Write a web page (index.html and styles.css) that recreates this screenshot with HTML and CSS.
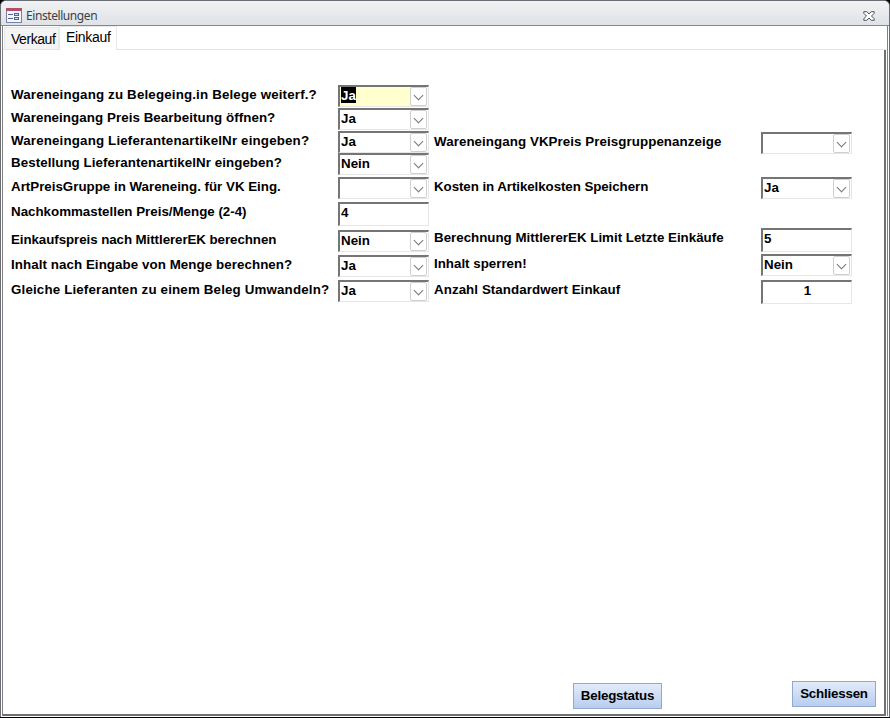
FILE: index.html
```
<!DOCTYPE html>
<html lang="de">

<head>
    <meta charset="UTF-8">
    <title>Einstellungen</title>
    <link rel="stylesheet" href="styles.css">
</head>

<body>

    <div class="window">
        <div class="titlebar">
            <svg class="form-icon" width="16" height="15" viewBox="0 0 16 15">
                <rect x="0.5" y="0.5" width="15" height="14" fill="#f4f6fc" stroke="#7783a8"/>
                <rect x="0" y="0" width="16" height="3" fill="#b0506a"/>
                <path d="M2 6.500h5M2 10.500h5" stroke="#56648f"/>
                <rect x="8.5" y="5.5" width="4" height="2" fill="#cfdcf5" stroke="#56648f"/>
                <rect x="8.5" y="9.5" width="4" height="2" fill="#cfdcf5" stroke="#56648f"/>
            </svg>
            <span class="title">Einstellungen</span>
            <svg class="close" width="12" height="10" viewBox="0 0 12 10">
                <path d="M0.800 0.700h3L6 3l2.200-2.300h3v1.600L8.500 5l2.700 2.700v1.600h-3L6 7 3.800 9.300h-3V7.700L3.500 5 0.800 2.300z" fill="#fff" stroke="#4d535e"/>
            </svg>
        </div>

        <div class="client">
            <div class="tabs">
                <div class="tab">Verkauf</div>
                <div class="tab active">Einkauf</div>
            </div>

            <div class="page">
                <div class="forms">
                    <div class="form left">
                        <label class="wide">Wareneingang zu Belegeing.in Belege weiterf.?</label>
                        <div class="field combo focus"><span class="selected">Ja</span><i class="arrow"></i></div>
                        <label class="mid">Wareneingang Preis Bearbeitung öffnen?</label>
                        <div class="field combo"><span>Ja</span><i class="arrow"></i></div>
                        <label class="wide">Wareneingang LieferantenartikelNr eingeben?</label>
                        <div class="field combo"><span>Ja</span><i class="arrow"></i></div>
                        <label class="mid">Bestellung LieferantenartikelNr eingeben?</label>
                        <div class="field combo"><span>Nein</span><i class="arrow"></i></div>
                        <label>ArtPreisGruppe in Wareneing. für VK Eing.</label>
                        <div class="field combo"><span></span><i class="arrow"></i></div>
                        <label>Nachkommastellen Preis/Menge (2-4)</label>
                        <div class="field text"><span>4</span></div>
                        <label class="tight">Einkaufspreis nach MittlererEK berechnen</label>
                        <div class="field combo"><span>Nein</span><i class="arrow"></i></div>
                        <label class="mid">Inhalt nach Eingabe von Menge berechnen?</label>
                        <div class="field combo"><span>Ja</span><i class="arrow"></i></div>
                        <label class="wide">Gleiche Lieferanten zu einem Beleg Umwandeln?</label>
                        <div class="field combo"><span>Ja</span><i class="arrow"></i></div>
                    </div>

                    <div class="form right">
                        <label class="mid">Wareneingang VKPreis Preisgruppenanzeige</label>
                        <div class="field combo"><span></span><i class="arrow"></i></div>
                        <label class="tight">Kosten in Artikelkosten Speichern</label>
                        <div class="field combo"><span>Ja</span><i class="arrow"></i></div>
                        <label>Berechnung MittlererEK Limit Letzte Einkäufe</label>
                        <div class="field text"><span>5</span></div>
                        <label>Inhalt sperren!</label>
                        <div class="field combo"><span>Nein</span><i class="arrow"></i></div>
                        <label class="mid">Anzahl Standardwert Einkauf</label>
                        <div class="field text center"><span>1</span></div>
                    </div>
                </div>

                <div class="buttons">
                    <button class="btn status">Belegstatus</button>
                    <button class="btn exit">Schliessen</button>
                </div>
            </div>
        </div>
    </div>

</body>

</html>
```

FILE: styles.css
```
* {
    box-sizing: border-box;
}

body {
    margin: 0;
    background: #000;
    font-family: "Liberation Sans", Arial, sans-serif;
    color: #000;
}

.window {
    width: 890px;
    height: 717px;
    display: flex;
    flex-direction: column;
    padding: 0 1px 1px 1px;
    background: #fff;
    border: 1px solid #6b6f75;
    border-bottom: none;
    border-radius: 6px 6px 0 0;
}

.titlebar {
    height: 25px;
    flex: none;
    display: flex;
    align-items: center;
    margin: 0 -1px;
    padding: 5px 14px 0 5px;
    background: linear-gradient(#f1f2f4, #dfe2e6);
    border-bottom: 1px solid #85898f;
    border-radius: 5px 5px 0 0;
}

.title {
    flex: 1;
    margin-left: 4px;
    font-family: "Noto Sans", sans-serif;
    font-size: 12px;
    letter-spacing: -0.42px;
    line-height: 16px;
    color: #3c3f45;
}

.client {
    flex: 1;
    display: flex;
    flex-direction: column;
    border-left: 1px solid #808080;
    border-right: 1px solid #808080;
}

.tabs {
    height: 24px;
    flex: none;
    display: flex;
    align-items: flex-end;
    padding-left: 1px;
    border-bottom: 1px solid #e4e4e4;
    font-size: 14px;
}

.tab {
    width: 55px;
    height: 22px;
    padding-left: 6px;
    line-height: 22px;
    letter-spacing: -0.45px;
    background: #f4f4f4;
    border: 1px solid #e8e8e8;
    border-bottom: none;
}

.tab.active {
    width: 58px;
    height: 24px;
    margin-bottom: -1px;
    line-height: 21px;
    letter-spacing: -0.3px;
    background: #fff;
}

.page {
    flex: 1;
    display: flex;
    flex-direction: column;
    justify-content: space-between;
    margin-right: 1px;
    padding: 35px 0 0 8px;
    border-right: 2px solid #707070;
    border-bottom: 2px solid #707070;
}

.forms {
    display: flex;
    gap: 5px;
}

.form {
    display: grid;
    grid-template-columns: 327px 91px;
    align-content: start;
    font-size: 13.33px;
    font-weight: bold;
}

.form.left {
    grid-template-rows: 23px 23px 22px 24px 25px 28px 25px 25px 24px;
}

.form.right {
    grid-template-rows: 45px 51px 26px 26px 24px;
    margin-top: 47px;
}

.form label {
    line-height: 20px;
    white-space: nowrap;
}

.form .wide {
    letter-spacing: 0.16px;
}

.form .mid {
    letter-spacing: 0.07px;
}

.form .tight {
    letter-spacing: -0.07px;
}

.field {
    display: flex;
    height: 22px;
    border: 1px solid #e6e6e6;
    border-top: 2px solid #757575;
    border-left: 2px solid #757575;
    background: #fff;
}

.field.text {
    height: 24px;
}

.field span {
    height: 16px;
    padding-left: 1px;
    line-height: 17px;
}

.field.center {
    justify-content: center;
}

.focus {
    background: #ffffd0;
}

.field .selected {
    margin-left: 1px;
    padding-left: 0;
    background: #000;
    color: #fff;
}

.arrow {
    width: 17px;
    height: 19px;
    display: flex;
    align-items: center;
    justify-content: center;
    margin-left: auto;
    margin-right: 1px;
    background: #fff;
    border: 1px solid #cfcfcf;
    border-radius: 2px;
}

.arrow::after {
    content: "";
    width: 6px;
    height: 6px;
    margin-top: -3px;
    border-right: 1px solid #777;
    border-bottom: 1px solid #777;
    transform: rotate(45deg);
}

.buttons {
    display: flex;
    justify-content: flex-end;
    gap: 130px;
    padding: 0 8px 5px 0;
}

.btn {
    height: 26px;
    padding: 0 0 2px;
    font-family: inherit;
    font-size: 13.33px;
    font-weight: bold;
    letter-spacing: -0.2px;
    color: #000;
    background: linear-gradient(#e2ebfa, #b9cdf0);
    border: 1px solid #93a9cc;
}

.status {
    width: 89px;
    margin-top: 2px;
}

.exit {
    width: 84px;
    margin-bottom: 2px;
}
```
